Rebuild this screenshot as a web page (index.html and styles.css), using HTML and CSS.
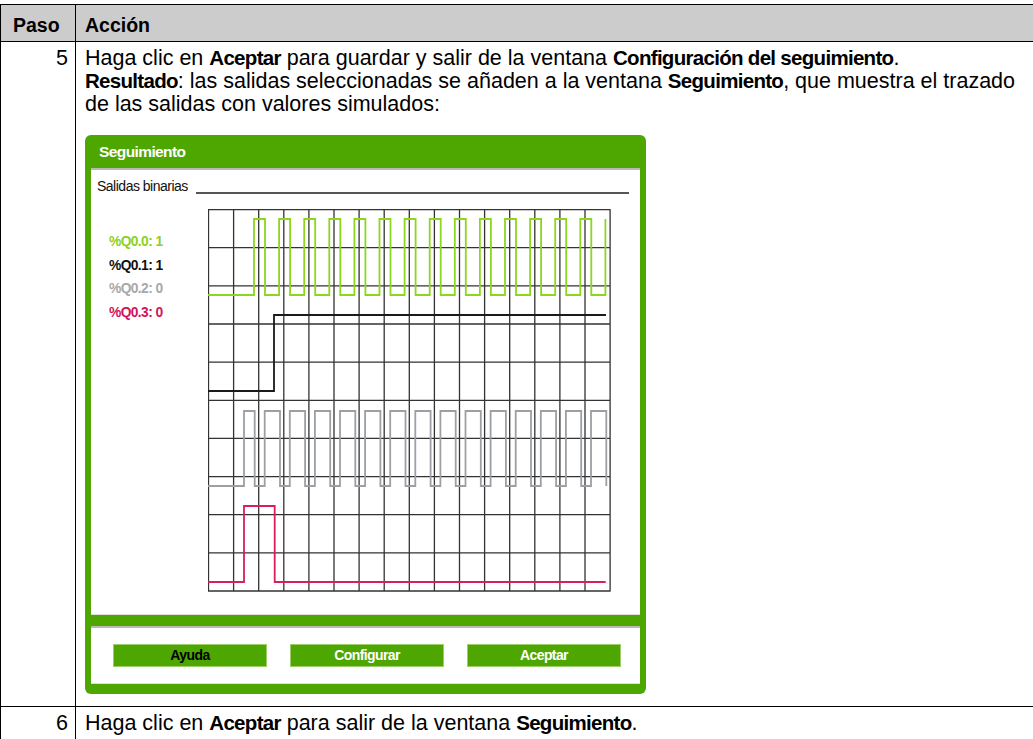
FILE: index.html
```html
<!DOCTYPE html>
<html lang="es">
<head>
    <meta charset="UTF-8">
    <meta name="viewport" content="width=device-width, initial-scale=1.0">
    <title>Seguimiento</title>
    <link rel="stylesheet" href="styles.css">
</head>
<body>
    <table class="steps">
        <colgroup>
            <col class="col-step">
            <col>
        </colgroup>
        <thead>
            <tr>
                <th class="step">Paso</th>
                <th class="action">Acción</th>
            </tr>
        </thead>
        <tbody>
            <tr>
                <td class="step">5</td>
                <td class="action">
                    <p class="step-text">Haga clic en <b>Aceptar</b> para guardar y salir de la ventana <b>Configuración del seguimiento</b>.<br><b>Resultado</b>: las salidas seleccionadas se añaden a la ventana <b>Seguimiento</b>, que muestra el trazado de las salidas con valores simulados:</p>

                    <div class="trace">
                        <div class="trace-title">Seguimiento</div>
                        <div class="trace-body">
                            <div class="trace-head">
                                <span>Salidas binarias</span>
                                <span class="trace-rule"></span>
                            </div>
                            <div class="trace-chart">
                                <ul class="legend">
                                    <li class="q0">%Q0.0: 1</li>
                                    <li class="q1">%Q0.1: 1</li>
                                    <li class="q2">%Q0.2: 0</li>
                                    <li class="q3">%Q0.3: 0</li>
                                </ul>
                                <svg class="plot" width="404" height="384" viewBox="0 0 404 384">
                                    <!-- grid -->
                                    <path class="grid" d="M0.5 0.5V382M25.6 0.5V382M50.7 0.5V382M75.8 0.5V382M100.9 0.5V382M126 0.5V382M151.1 0.5V382M176.2 0.5V382M201.3 0.5V382M226.4 0.5V382M251.5 0.5V382M276.6 0.5V382M301.7 0.5V382M326.8 0.5V382M351.9 0.5V382M377 0.5V382M402.1 0.5V382
                                        M0 0.5H402.6M0 38.7H402.6M0 76.8H402.6M0 115H402.6M0 153.1H402.6M0 191.3H402.6M0 229.4H402.6M0 267.6H402.6M0 305.7H402.6M0 343.9H402.6M0 382H402.6"/>
                                    <!-- %Q0.0 -->
                                    <polyline class="sig q0" points="0,86 46,86 46,10 57,10 57,86 71.1,86 71.1,10 82.1,10 82.1,86 96.2,86 96.2,10 107.2,10 107.2,86 121.3,86 121.3,10 132.3,10 132.3,86 146.4,86 146.4,10 157.4,10 157.4,86 171.5,86 171.5,10 182.5,10 182.5,86 196.6,86 196.6,10 207.6,10 207.6,86 221.7,86 221.7,10 232.7,10 232.7,86 246.8,86 246.8,10 257.8,10 257.8,86 271.9,86 271.9,10 282.9,10 282.9,86 297,86 297,10 308,10 308,86 322.1,86 322.1,10 333.1,10 333.1,86 347.2,86 347.2,10 358.2,10 358.2,86 372.3,86 372.3,10 383.3,10 383.3,86 397.4,86 397.4,10"/>
                                    <!-- %Q0.1 -->
                                    <polyline class="sig q1" points="0,182 66,182 66,106 398,106"/>
                                    <!-- %Q0.2 -->
                                    <polyline class="sig q2" points="0,277 36,277 36,202 46.7,202 46.7,277 56.7,277 56.7,202 72,202 72,277 81.8,277 81.8,202 97.1,202 97.1,277 106.9,277 106.9,202 122.2,202 122.2,277 132,277 132,202 147.3,202 147.3,277 157.1,277 157.1,202 172.4,202 172.4,277 182.2,277 182.2,202 197.5,202 197.5,277 207.3,277 207.3,202 222.6,202 222.6,277 232.4,277 232.4,202 247.7,202 247.7,277 257.5,277 257.5,202 272.8,202 272.8,277 282.6,277 282.6,202 297.9,202 297.9,277 307.7,277 307.7,202 323,202 323,277 332.8,277 332.8,202 348.1,202 348.1,277 357.9,277 357.9,202 373.2,202 373.2,277 383,277 383,202 398.3,202 398.3,277"/>
                                    <!-- %Q0.3 -->
                                    <polyline class="sig q3" points="0,373 36,373 36,297 66.7,297 66.7,373 397.7,373"/>
                                </svg>
                            </div>
                        </div>
                        <div class="trace-foot">
                            <button type="button" class="btn btn-help">Ayuda</button>
                            <button type="button" class="btn">Configurar</button>
                            <button type="button" class="btn">Aceptar</button>
                        </div>
                    </div>
                </td>
            </tr>
            <tr>
                <td class="step">6</td>
                <td class="action">
                    <p class="step-text">Haga clic en <b>Aceptar</b> para salir de la ventana <b>Seguimiento</b>.</p>
                </td>
            </tr>
        </tbody>
    </table>
</body>
</html>
```

FILE: styles.css
```css
html,
body {
    overflow: hidden;
}

body {
    margin: 4px 0 0;
    font-family: "Liberation Sans", Arial, sans-serif;
    color: #000;
    background-color: #fff;
}

.steps {
    width: 100%;
    table-layout: fixed;
    border-collapse: separate;
    border-spacing: 0;
    border-top: 1px solid #000;
    border-left: 1px solid #000;
}

.col-step {
    width: 75px;
}

.steps th,
.steps td {
    box-sizing: border-box;
    padding: 0;
    border-bottom: 1px solid #000;
    vertical-align: top;
    text-align: left;
}

.steps th {
    background-color: #ccc;
    font-size: 19.5px;
    font-weight: bold;
    line-height: 23px;
    padding-top: 9px;
    padding-bottom: 4px;
}

.steps .step {
    border-right: 1px solid #000;
}

.steps th.step {
    padding-left: 12px;
}

.steps th.action {
    padding-left: 9px;
}

.steps td {
    font-size: 21.5px;
    line-height: 23px;
    padding-top: 5px;
}

.steps td.step {
    text-align: right;
    padding-right: 7px;
}

.steps td.action {
    padding-left: 9px;
    padding-bottom: 12px;
}

.step-text {
    margin: 0;
}

.step-text b {
    font-size: 20.5px;
    font-weight: bold;
    letter-spacing: -0.7px;
    line-height: 1;
}

/* Seguimiento window */
.trace {
    box-sizing: border-box;
    width: 561px;
    margin-top: 19px;
    padding: 0 6px 10px;
    background-color: #4ea600;
    border-radius: 6px;
}

.trace-title {
    height: 33px;
    padding-left: 8px;
    color: #fff;
    font-size: 15.5px;
    font-weight: bold;
    letter-spacing: -0.6px;
    line-height: 34px;
}

.trace-body {
    box-sizing: border-box;
    height: 447px;
    padding: 7px 11px 0 6px;
    background-color: #fff;
    border-top: 2px solid #b9b9b9;
    border-bottom: 1px solid #ddd;
}

.trace-head {
    display: flex;
    align-items: flex-end;
    font-size: 14px;
    letter-spacing: -0.5px;
    line-height: 18px;
    color: #111;
}

.trace-rule {
    flex: 1;
    height: 0;
    margin: 0 0 1px 8px;
    border-bottom: 2px solid #555;
}

.trace-chart {
    display: flex;
    margin-top: 14px;
}

.legend {
    box-sizing: border-box;
    width: 111px;
    margin: 0;
    padding: 21px 0 0 12px;
    list-style: none;
    font-size: 13.8px;
    font-weight: bold;
    letter-spacing: -0.6px;
    line-height: 23.7px;
}

.legend .q0 { color: #8dd01f; }
.legend .q1 { color: #111; }
.legend .q2 { color: #a8a8a8; }
.legend .q3 { color: #d3145b; }

.plot {
    display: block;
}

.grid {
    fill: none;
    stroke: #333;
    stroke-width: 1.3;
}

.sig {
    fill: none;
    stroke-width: 1.8;
}

.sig.q0 { stroke: #8dd61e; }
.sig.q1 { stroke: #1a1a1a; }
.sig.q2 { stroke: #9ca0a4; }
.sig.q3 { stroke: #d81e5e; }

.trace-foot {
    box-sizing: border-box;
    display: flex;
    gap: 23px;
    height: 58px;
    margin-top: 11px;
    padding: 16px 19px 0 22px;
    background-color: #fff;
    border-top: 2px solid #b9b9b9;
    border-bottom: 1px solid #ddd;
}

.btn {
    width: 154px;
    height: 23px;
    padding: 0;
    background-color: #4ea600;
    border: 1px solid #9ccf6c;
    color: #fff;
    font-family: inherit;
    font-size: 14px;
    font-weight: bold;
    letter-spacing: -0.6px;
    line-height: 21px;
}

.btn-help {
    color: #000;
}
```
